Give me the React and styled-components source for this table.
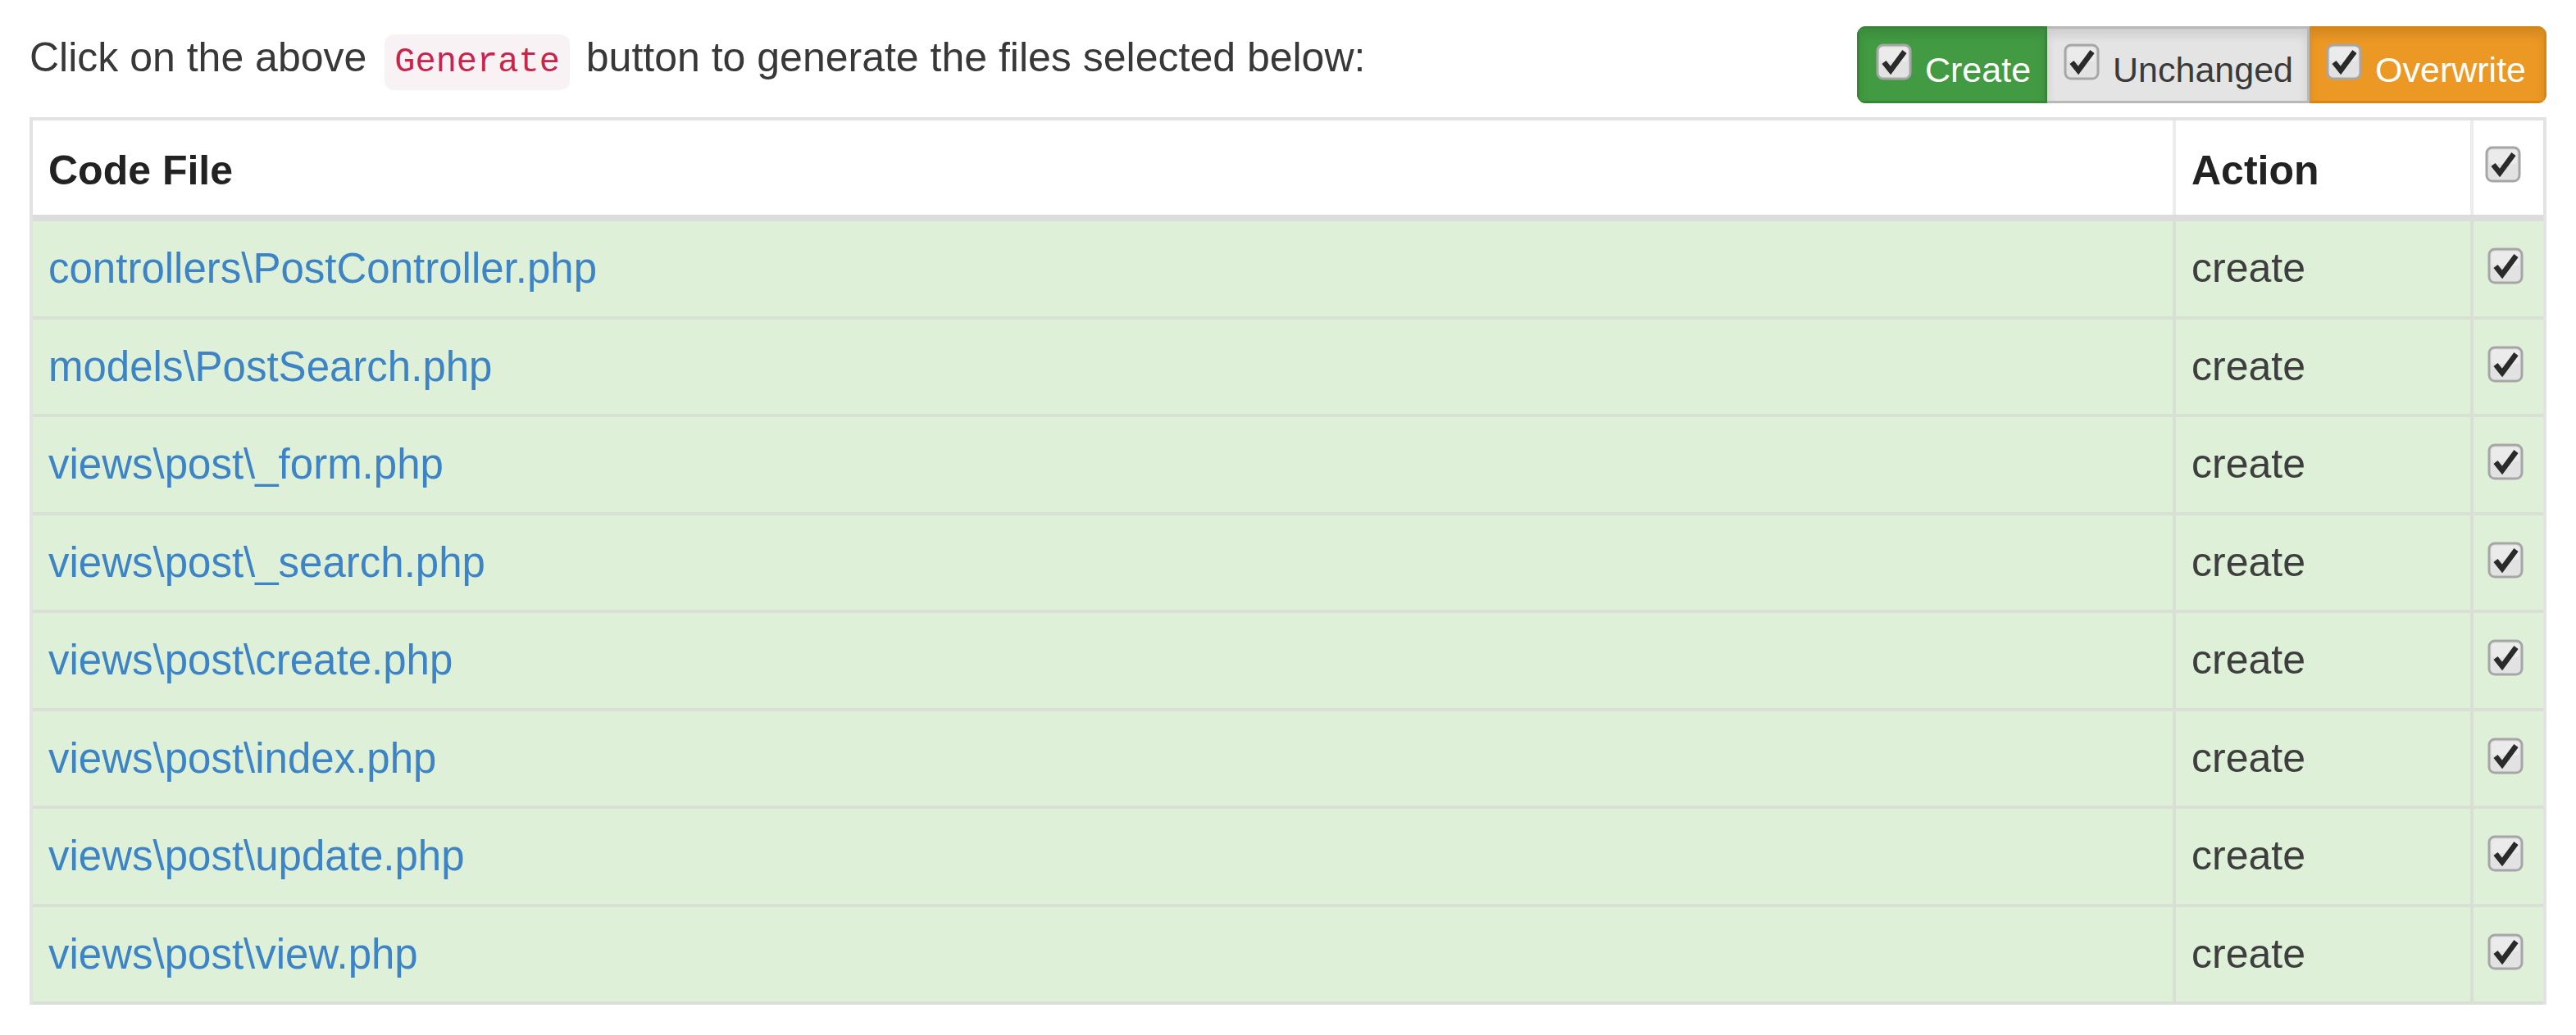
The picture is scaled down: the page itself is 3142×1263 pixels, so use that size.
import React from 'react';
import styled, { createGlobalStyle } from 'styled-components';

const files = [
  'controllers\\PostController.php',
  'models\\PostSearch.php',
  'views\\post\\_form.php',
  'views\\post\\_search.php',
  'views\\post\\create.php',
  'views\\post\\index.php',
  'views\\post\\update.php',
  'views\\post\\view.php',
];

const filters = [
  { label: 'Create', kind: 'create' },
  { label: 'Unchanged', kind: 'unchanged' },
  { label: 'Overwrite', kind: 'overwrite' },
];

// old-style grey checkbox with a black tick
const Check = () => (
  <CheckBox>
    <svg width="44" height="45" viewBox="0 0 44 45">
      <rect x="2" y="2" width="40" height="41" rx="7" fill="#e2e2e2" stroke="#a6a6a6" strokeWidth="3" />
      <rect x="5" y="5" width="34" height="17" rx="4" fill="#ebebeb" />
      <path d="M10 23 L18 33 L35 10" fill="none" stroke="#2a2a2a" strokeWidth="6.5" strokeLinejoin="miter" />
    </svg>
  </CheckBox>
);

const App = () => {
  return (
    <Page>
      <GlobalStyle />
      <TopBar>
        <Intro>
          Click on the above <Code>Generate</Code> button to generate the files selected below:
        </Intro>
        <BtnGroup>
          {filters.map((f) => (
            <FilterBtn key={f.kind} kind={f.kind}>
              <Check />
              <span>{f.label}</span>
            </FilterBtn>
          ))}
        </BtnGroup>
      </TopBar>
      <Table>
        <HeadRow>
          <Th>Code File</Th>
          <Th>Action</Th>
          <ThCheck><Check /></ThCheck>
        </HeadRow>
        {files.map((file) => (
          <Row key={file}>
            <Td><FileLink href="#">{file}</FileLink></Td>
            <Td>create</Td>
            <TdCheck><Check /></TdCheck>
          </Row>
        ))}
      </Table>
    </Page>
  );
};

const GlobalStyle = createGlobalStyle`
  html, body {
    margin: 0;
    padding: 0;
    background: #ffffff;
  }
  body {
    font-family: "Liberation Sans", Arial, sans-serif;
    color: #333333;
  }
`;

const Page = styled.div`
  width: 3142px;
  height: 1263px;
  box-sizing: border-box;
  padding: 0 36px;
`;

const TopBar = styled.div`
  height: 143px;
  box-sizing: border-box;
  padding-top: 32px;
  display: flex;
  justify-content: space-between;
  align-items: flex-start;
`;

const Intro = styled.div`
  margin-top: 3px;
  font-size: 50px;
  line-height: 71px;
  color: #383838;
  white-space: nowrap;
`;

const Code = styled.code`
  font-family: "Liberation Mono", "Courier New", monospace;
  font-size: 42px;
  color: #c7254e;
  background: #f9f2f4;
  border-radius: 12px;
  padding: 10px 12px;
  margin: 0 6px 0 8px;
`;

const BtnGroup = styled.div`
  display: flex;
  border-radius: 11px;
  overflow: hidden;
`;

const btnColors = {
  create: { bg: '#429b42', border: '#398439', color: '#ffffff' },
  unchanged: { bg: '#e4e4e4', border: '#b8b8b8', color: '#3a3a3a' },
  overwrite: { bg: '#ec9824', border: '#d98512', color: '#ffffff' },
};

const FilterBtn = styled.label`
  display: flex;
  align-items: flex-start;
  gap: 16px;
  height: 94px;
  box-sizing: border-box;
  padding: 18px 17px 0 20px;
  border: 3px solid ${(p) => btnColors[p.kind].border};
  background: ${(p) => btnColors[p.kind].bg};
  color: ${(p) => btnColors[p.kind].color};
  box-shadow: inset 0 8px 12px rgba(0, 0, 0, 0.1);
  font-size: 43px;
  line-height: 64px;
  white-space: nowrap;

  & + & {
    border-left: none;
  }
  &:last-child {
    padding-right: 22px;
  }
`;

const CheckBox = styled.span`
  display: inline-flex;
  flex-shrink: 0;
  width: 44px;
  height: 45px;
`;

const Table = styled.div`
  border: 4px solid #e2e2e2;
  border-bottom: none;
`;

const HeadRow = styled.div`
  display: grid;
  grid-template-columns: 1fr 363px 85px;
  height: 123px;
  box-sizing: border-box;
  border-bottom: 8px solid #dcdcdc;
  background: #ffffff;
`;

const Th = styled.div`
  display: flex;
  align-items: flex-end;
  padding: 0 19px 18px;
  border-right: 4px solid #ececec;
  font-size: 50px;
  line-height: 71px;
  font-weight: bold;
  color: #222222;
`;

const ThCheck = styled.div`
  display: flex;
  align-items: center;
  padding: 0 0 8px 14px;
`;

const Row = styled.div`
  display: grid;
  grid-template-columns: 1fr 363px 85px;
  height: 119.5px;
  box-sizing: border-box;
  border-bottom: 4px solid #d9dfd5;
  background: #dff0d8;
`;

const Td = styled.div`
  display: flex;
  align-items: center;
  padding: 0 19px;
  border-right: 4px solid #d9dfd5;
  font-size: 50px;
  line-height: 71px;
  color: #3e3e3e;
  white-space: nowrap;
`;

const TdCheck = styled.div`
  display: flex;
  align-items: center;
  padding: 0 0 6px 17px;
`;

const FileLink = styled.a`
  font-size: 51px;
  color: #3d84c6;
  text-decoration: none;
`;

export default App;
